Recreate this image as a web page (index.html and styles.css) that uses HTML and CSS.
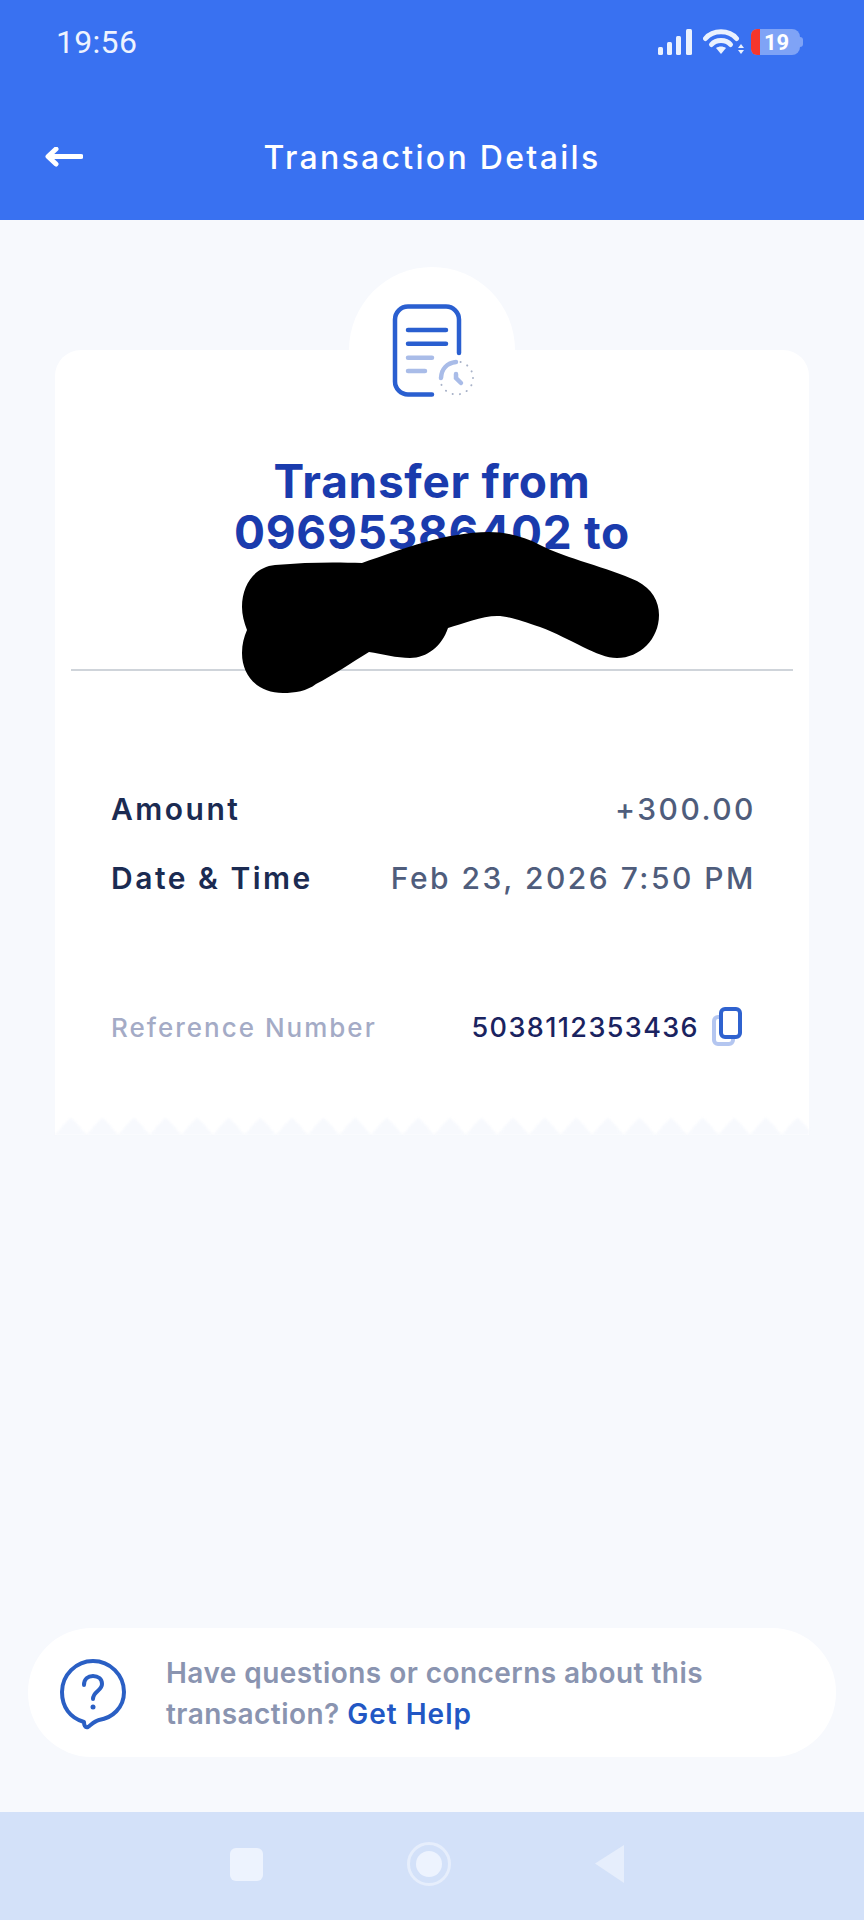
FILE: index.html
```html
<!DOCTYPE html>
<html lang="en">
<head>
    <meta charset="UTF-8">
    <meta name="viewport" content="width=device-width, initial-scale=1.0">
    <title>Transaction Details</title>
    <link rel="stylesheet" href="styles.css">
</head>
<body>
    <header class="top-bar">
        <div class="status-bar">
            <span class="status-time">19:56</span>
            <div class="status-icons">
                <svg class="status-signal" width="42" height="26" viewBox="0 0 42 26">
                    <rect x="0" y="18" width="5" height="8" rx="1.5"/>
                    <rect x="9" y="13" width="5" height="13" rx="1.5"/>
                    <rect x="18" y="7" width="5" height="19" rx="1.5"/>
                    <rect x="28" y="0" width="6" height="26" rx="1.5"/>
                </svg>
                <svg class="status-wifi" width="44" height="26" viewBox="0 0 44 26">
                    <path d="M2.500 9.500 C10 0.500 26 0.500 33.500 9.500" />
                    <path d="M8.500 15.500 C13 10 23 10 27.500 15.500" />
                    <path class="wifi-dot" d="M13 19 C16 17 20 17 23 19 L18 25 Z"/>
                    <path class="wifi-dot" d="M38 15 L41 19 L35 19 Z M35 21 L41 21 L38 25 Z"/>
                </svg>
                <div class="battery">
                    <span class="battery-level"></span>
                    <span class="battery-text">19</span>
                </div>
            </div>
        </div>
        <div class="nav-bar">
            <svg class="back-arrow" width="38" height="20" viewBox="0 0 38 20">
                <path d="M36 9.500 H4 M11 2 L3 9.500 L11 17"/>
            </svg>
            <h1 class="nav-title">Transaction Details</h1>
        </div>
    </header>

    <main class="content">
        <section class="ticket">
            <div class="ticket-bump"></div>
            <svg class="ticket-icon" width="180" height="160" viewBox="0 0 180 160">
                <path class="doc-line" d="M117 92 V58.500 A13 13 0 0 0 104 45.500 H66 A13 13 0 0 0 53 58.500 V120.500 A13 13 0 0 0 66 133.500 H90"/>
                <path class="doc-line" d="M66 69 H104 M66 82.700 H104"/>
                <circle class="doc-dots" cx="114.500" cy="117" r="16.500"/>
                <path class="doc-soft" d="M66 96.700 H90 M66 110 H83"/>
                <path class="doc-soft" d="M99 117 C99.500 108 105 102 114 101 M114 113 V117 L119 122"/>
            </svg>

            <h2 class="ticket-title">Transfer from<br>09695386402 to</h2>
            <hr class="ticket-divider">

            <div class="detail-row">
                <span class="detail-label">Amount</span>
                <span class="detail-value">+300.00</span>
            </div>
            <div class="detail-row">
                <span class="detail-label">Date &amp; Time</span>
                <span class="detail-value">Feb 23, 2026 7:50 PM</span>
            </div>

            <div class="ref-row">
                <span class="ref-label">Reference Number</span>
                <div class="ref-value">
                    <span class="ref-number">5038112353436</span>
                    <svg class="copy-icon" width="32" height="42" viewBox="0 0 32 42">
                        <rect class="copy-back" x="4" y="11" width="19" height="27" rx="4"/>
                        <rect class="copy-front" x="11" y="3" width="19" height="28" rx="4"/>
                    </svg>
                </div>
            </div>

            <div class="ticket-edge"></div>

            <!-- scribble covering the recipient name -->
            <svg class="scribble" width="430" height="170" viewBox="0 0 430 170">
                <path d="M5 78 C5 55 18 38 38 36 C70 33 100 33 125 34 C165 20 210 3 252 3 C270 3 288 8 303 16 C330 30 370 38 400 52 C415 60 422 72 422 86 C422 110 403 129 380 129 C360 129 335 110 303 98 C285 92 272 87 260 87 C245 87 225 95 211 99 C205 117 190 129 173 129 C160 129 145 125 132 123 C115 133 97 146 79 155 C70 162 58 164 46 164 C22 164 5 148 5 124 C5 115 7 108 10 101 C7 93 5 86 5 78 Z"/>
            </svg>
        </section>

        <section class="help-card">
            <svg class="help-icon" width="68" height="72" viewBox="0 0 68 72">
                <path class="help-bubble" d="M34 3 C51 3 65 17 65 34 C65 50 53 60 40 62 C36 63 33 66 29 69 C26 70 25 67 25 64 C11 60 3 49 3 34 C3 17 17 3 34 3 Z"/>
                <path class="help-bubble" d="M25 27 C25 21 29 18 34 18 C39 18 43 21 43 26 C43 33 34 33 34 41"/>
                <circle class="help-dot" cx="34" cy="49" r="2.500"/>
            </svg>
            <p class="help-text">Have questions or concerns about this transaction? <a class="help-link">Get Help</a></p>
        </section>
    </main>

    <footer class="system-nav">
        <span class="sys-square"></span>
        <span class="sys-home"><span class="sys-home-dot"></span></span>
        <svg class="sys-back" width="32" height="40" viewBox="0 0 32 40">
            <path d="M30 1 V39 L1 19.500 Z"/>
        </svg>
    </footer>
</body>
</html>
```

FILE: styles.css
```css
* {
    box-sizing: border-box;
}
body {
    margin: 0;
    width: 864px;
    height: 1920px;
    display: flex;
    flex-direction: column;
    background-color: #f7f9fd;
    font-family: Inter, Arial, sans-serif;
    overflow: hidden;
}

/* Top bar */
.top-bar {
    height: 220px;
    background-color: #3971f1;
    color: #fff;
}
.status-bar {
    height: 88px;
    padding: 0 64px 4px 56px;
    display: flex;
    justify-content: space-between;
    align-items: center;
}
.status-time {
    font-family: Roboto, sans-serif;
    font-size: 32px;
    letter-spacing: 0.3px;
    color: #eef3fe;
}
.status-icons {
    display: flex;
    align-items: center;
    gap: 6px;
}
.status-signal {
    margin-right: -3px;
    fill: #eaf1fe;
}
.status-wifi {
    margin-right: -2px;
    fill: none;
    stroke: #eaf1fe;
    stroke-width: 5;
    stroke-linecap: round;
}
.wifi-dot {
    fill: #eaf1fe;
    stroke: none;
}
.battery {
    position: relative;
    width: 49px;
    height: 26px;
    border-radius: 6px 8px 8px 6px;
    background-color: #7fa3f6;
    display: flex;
    justify-content: center;
    align-items: center;
}
.battery::after {
    content: "";
    position: absolute;
    right: -3px;
    top: 8px;
    width: 3px;
    height: 10px;
    border-radius: 0 3px 3px 0;
    background-color: #7fa3f6;
}
.battery-level {
    position: absolute;
    left: 0;
    top: 0;
    width: 9px;
    height: 26px;
    border-radius: 6px 0 0 6px;
    background-color: #f5362c;
}
.battery-text {
    font-family: Roboto, sans-serif;
    font-size: 22px;
    font-weight: 700;
    margin-left: 2px;
}
.nav-bar {
    position: relative;
    height: 132px;
    padding-top: 6px;
    display: flex;
    justify-content: center;
    align-items: center;
}
.back-arrow {
    position: absolute;
    left: 45px;
    top: 59px;
    fill: none;
    stroke: #fff;
    stroke-width: 5;
    stroke-linecap: round;
    stroke-linejoin: round;
}
.nav-title {
    margin: 0;
    font-size: 32px;
    font-weight: 500;
    letter-spacing: 2.300px;
}

/* Content */
.content {
    flex: 1;
    display: flex;
    flex-direction: column;
    justify-content: space-between;
    padding: 130px 28px 55px;
}
.ticket {
    position: relative;
    margin: 0 27px;
    height: 785px;
    padding: 0 53px 0 56px;
    background-color: #fff;
    border-radius: 26px 26px 0 0;
    display: flex;
    flex-direction: column;
}
.ticket-bump {
    position: absolute;
    left: 294px;
    top: -83px;
    width: 166px;
    height: 166px;
    border-radius: 50%;
    background-color: #fff;
}
.ticket-icon {
    position: relative;
    align-self: center;
    margin-top: -89px;
    margin-left: -4px;
    flex-shrink: 0;
    fill: none;
}
.doc-line {
    stroke: #2a5fd0;
    stroke-width: 4.500;
    stroke-linecap: round;
}
.doc-soft {
    stroke: #a9bce8;
    stroke-width: 4.500;
    stroke-linecap: round;
}
.doc-dots {
    stroke: #a8b2c8;
    stroke-width: 2;
    stroke-linecap: round;
    stroke-dasharray: 0.100 7.300;
}
.ticket-title {
    position: relative;
    margin: 35px 3px 0 0;
    font-size: 46px;
    line-height: 51px;
    font-weight: 700;
    letter-spacing: 0.7px;
    text-align: center;
    color: #1a3bad;
}
.ticket-divider {
    width: 722px;
    margin: 111px 0 0 -40px;
    border: none;
    border-top: 2px solid #cfd4da;
}
.detail-row {
    display: flex;
    justify-content: space-between;
    align-items: baseline;
    height: 69px;
    font-size: 30px;
    letter-spacing: 2.500px;
}
.ticket-divider + .detail-row {
    margin-top: 120px;
}
.detail-label {
    font-weight: 600;
    color: #1b2b52;
}
.detail-value {
    color: #4f5d7c;
    font-weight: 500;
}
.ref-row {
    display: flex;
    justify-content: space-between;
    align-items: center;
    margin-top: 77px;
}
.ref-label {
    font-size: 26px;
    font-weight: 500;
    letter-spacing: 2px;
    color: #a4abc6;
}
.ref-value {
    display: flex;
    align-items: center;
    gap: 11px;
    margin-right: 14px;
}
.ref-number {
    font-size: 27px;
    font-weight: 500;
    letter-spacing: 1.400px;
    color: #1a2360;
}
.copy-icon {
    fill: #fff;
}
.copy-back {
    stroke: #b4c6f0;
    stroke-width: 4;
}
.copy-front {
    stroke: #2f62cf;
    stroke-width: 4;
}
.ticket-edge {
    position: absolute;
    left: 0;
    right: 0;
    bottom: 0;
    height: 18px;
    background-image: conic-gradient(from 138deg at 50% 0, #f7f9fd 84deg, transparent 0);
    background-size: 31.600px 18px;
    background-repeat: repeat-x;
    filter: blur(1px);
}
.scribble {
    position: absolute;
    left: 182px;
    top: 179px;
    fill: #000;
}

/* Help card */
.help-card {
    height: 129px;
    padding: 2px 40px 0 31px;
    background-color: #fff;
    border-radius: 64px;
    display: flex;
    align-items: center;
    gap: 39px;
}
.help-icon {
    flex-shrink: 0;
    fill: none;
}
.help-bubble {
    stroke: #2a5fc4;
    stroke-width: 4;
    stroke-linecap: round;
    stroke-linejoin: round;
}
.help-dot {
    fill: #2a5fc4;
}
.help-text {
    margin: 0;
    font-size: 28px;
    line-height: 41px;
    font-weight: 600;
    letter-spacing: 0.450px;
    color: #8a94b0;
}
.help-link {
    letter-spacing: 1px;
    color: #2257c4;
}

/* Android nav */
.system-nav {
    height: 108px;
    padding: 0 238px 4px 230px;
    background-color: #d3e1f9;
    display: flex;
    justify-content: space-between;
    align-items: center;
}
.sys-square {
    width: 33px;
    height: 33px;
    border-radius: 6px;
    background-color: #edf3fe;
}
.sys-home {
    width: 44px;
    height: 44px;
    border: 3px solid #e6eefc;
    border-radius: 50%;
    display: flex;
    justify-content: center;
    align-items: center;
}
.sys-home-dot {
    width: 26px;
    height: 26px;
    border-radius: 50%;
    background-color: #edf3fe;
}
.sys-back {
    fill: #e6eefc;
}
```
